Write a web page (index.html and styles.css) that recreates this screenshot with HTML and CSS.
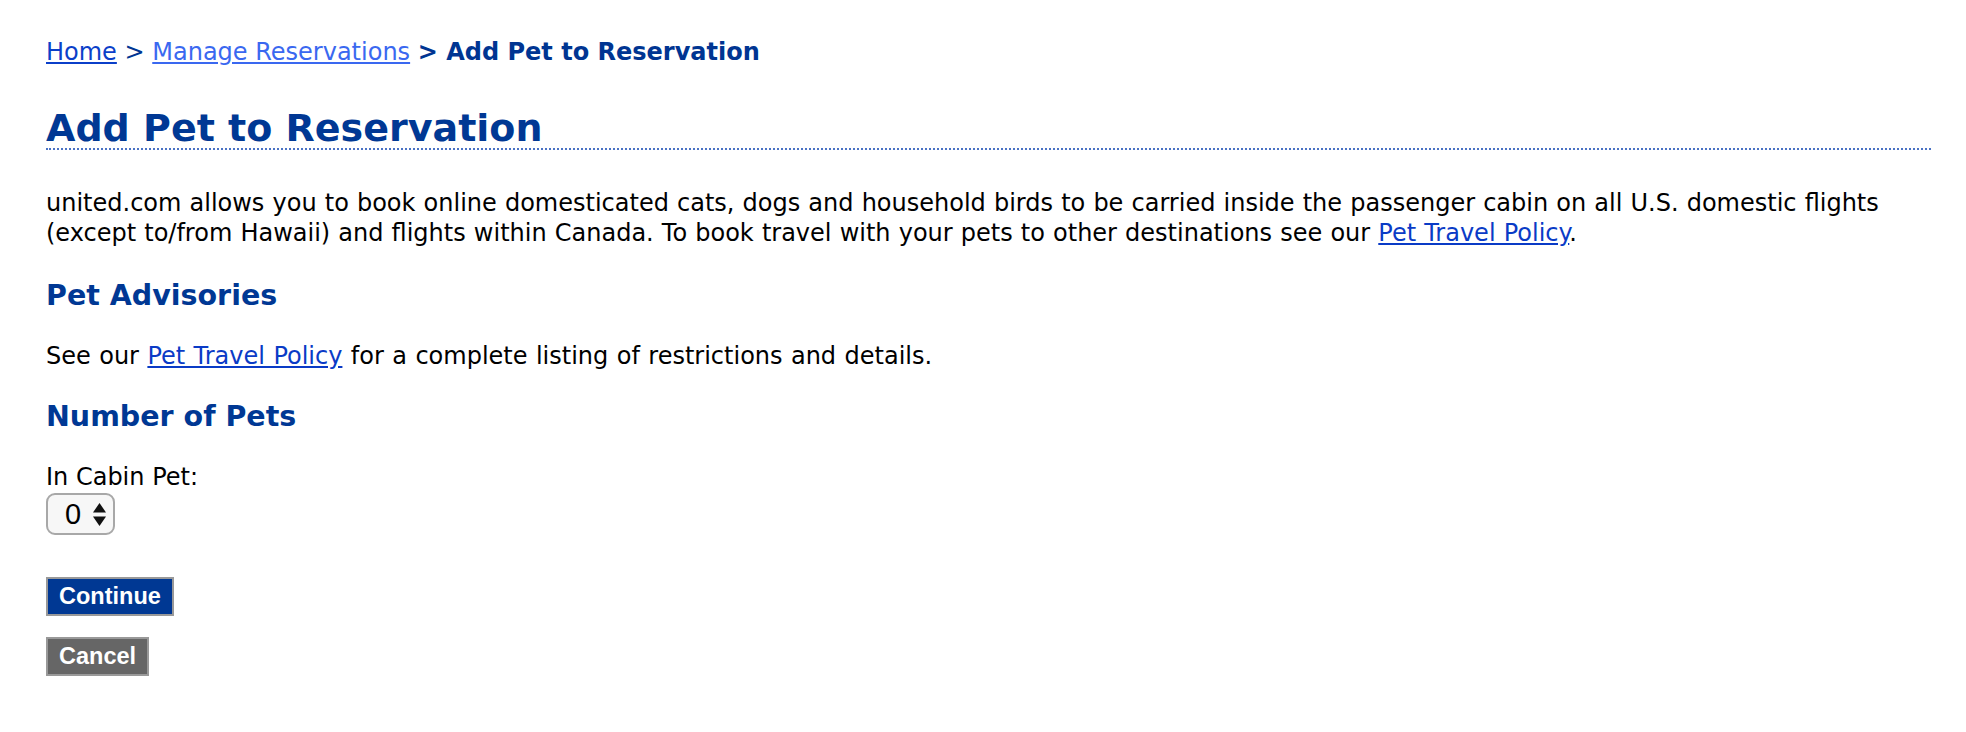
FILE: index.html
```html
<!DOCTYPE html>
<html lang="en">
<head>
<meta charset="utf-8">
<title>Add Pet to Reservation</title>
<link rel="stylesheet" href="styles.css">
</head>
<body>
<div class="page">
  <div class="breadcrumb">
    <a class="crumb-home" href="#">Home</a> &gt; <a class="crumb-link" href="#">Manage Reservations</a> <strong class="crumb-current">&gt; Add Pet to Reservation</strong>
  </div>
  <h1 class="title">Add Pet to Reservation</h1>
  <p class="intro">united.com allows you to book online domesticated cats, dogs and household birds to be carried inside the passenger cabin on all U.S. domestic flights (except to/from Hawaii) and flights within Canada. To book travel with your pets to other destinations see our <a class="text-link" href="#">Pet Travel Policy</a>.</p>
  <h2 class="section-title">Pet Advisories</h2>
  <p class="advisory">See our <a class="text-link" href="#">Pet Travel Policy</a> for a complete listing of restrictions and details.</p>
  <h2 class="section-title pets-title">Number of Pets</h2>
  <form class="pet-form">
    <label class="field-label" for="cabin">In Cabin Pet:</label>
    <div class="select-wrap">
      <select id="cabin" class="pet-select">
        <option>0</option>
        <option>1</option>
      </select>
      <svg class="select-arrows" width="13" height="23" viewBox="0 0 13 23" aria-hidden="true">
        <polygon points="6.5,0 13,9.5 0,9.5" fill="#111"/>
        <polygon points="0,13.5 13,13.5 6.5,23" fill="#111"/>
      </svg>
    </div>
    <div class="actions">
      <button type="button" class="btn btn-primary">Continue</button>
      <button type="button" class="btn btn-secondary">Cancel</button>
    </div>
  </form>
</div>
</body>
</html>
```

FILE: styles.css
```css
html, body {
  margin: 0;
  padding: 0;
  background: #ffffff;
}

body {
  font-family: Verdana, "DejaVu Sans", sans-serif;
  font-size: 24px;
  color: #000000;
}

.page {
  padding: 37px 35px 40px 46px;
}

.breadcrumb {
  line-height: 30px;
  color: #003592;
}

.crumb-home {
  color: #0b3fc9;
  text-decoration: underline;
}

.crumb-link {
  color: #3a68f0;
  text-decoration: underline;
}

.crumb-current {
  font-weight: bold;
  color: #003592;
}

.title {
  margin: 41px 0 0 0;
  font-size: 38px;
  line-height: 40px;
  font-weight: bold;
  color: #003894;
  border-bottom: 2px dotted #4a72c4;
}

.intro {
  margin: 38px 0 0 0;
  line-height: 30px;
  word-spacing: 0.5px;
}

.text-link {
  color: #0a3bc6;
  text-decoration: underline;
}

.section-title {
  margin: 30px 0 0 0;
  font-size: 28.5px;
  line-height: 36px;
  font-weight: bold;
  color: #003894;
}

.advisory {
  margin: 27px 0 0 0;
  line-height: 30px;
  word-spacing: 0.8px;
}

.pets-title {
  margin-top: 28px;
}

.pet-form {
  margin: 27px 0 0 0;
  display: flex;
  flex-direction: column;
  align-items: flex-start;
}

.field-label {
  display: block;
  line-height: 30px;
}

.select-wrap {
  position: relative;
  margin-top: 1px;
  width: 69px;
  height: 42px;
}

.pet-select {
  appearance: none;
  -webkit-appearance: none;
  box-sizing: border-box;
  width: 69px;
  height: 42px;
  margin: 0;
  padding: 0 0 0 17px;
  border: 2px solid #a8a8a8;
  border-radius: 9px;
  background: #f7f7f7;
  font-family: "Liberation Sans", Arial, sans-serif;
  font-size: 29px;
  color: #000000;
}

.select-arrows {
  position: absolute;
  left: 47px;
  top: 10px;
  pointer-events: none;
}

.actions {
  margin-top: 42px;
  display: flex;
  flex-direction: column;
  align-items: flex-start;
  gap: 21px;
}

.btn {
  box-sizing: border-box;
  height: 39px;
  margin: 0;
  padding: 0 11px;
  border: 2px solid #999999;
  border-radius: 0;
  font-family: "Liberation Sans", Arial, sans-serif;
  font-size: 23.5px;
  font-weight: bold;
  color: #ffffff;
  line-height: 35px;
}

.btn-primary {
  background: #003893;
}

.btn-secondary {
  background: #666666;
}
```
